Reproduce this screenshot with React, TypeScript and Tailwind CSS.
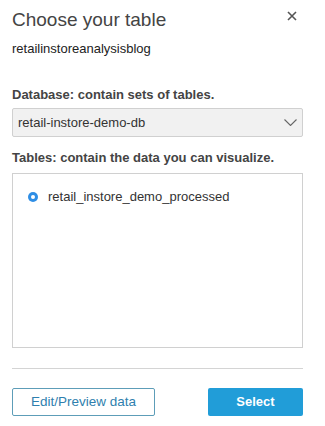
import React from 'react';

const App: React.FC = () => {
  return (
    <div
      className="w-[325px] h-[426px] bg-white pl-3 pr-[22px] text-[#333] overflow-hidden"
      style={{ fontFamily: '"Liberation Sans", Arial, sans-serif' }}
    >
      {/* Header */}
      <div className="flex items-start justify-between pt-[8px]">
        <h1 className="text-[19px] leading-[24px] text-[#444]">Choose your table</h1>
        <svg className="mt-[3px] mr-[6px] text-[#555]" width="10" height="10" viewBox="0 0 10 10">
          <path d="M1 1 L9 9 M9 1 L1 9" stroke="currentColor" strokeWidth="1.6" />
        </svg>
      </div>
      <p className="mt-[9px] text-[13px] leading-[16px] text-[#222]">retailinstoreanalysisblog</p>

      {/* Database */}
      <p className="mt-[30px] text-[13px] leading-[16px] font-bold text-[#444]">Database: contain sets of tables.</p>
      <div className="mt-[5px] h-[29px] flex items-center justify-between pl-[5px] pr-[5px] bg-[#f1f1f1] border border-[#d0d0d0] rounded-[2px]">
        <span className="text-[13px] text-[#333]">retail-instore-demo-db</span>
        <svg width="13" height="7" viewBox="0 0 13 7" className="text-[#666]">
          <path d="M0.5 0.5 L6.5 6.5 L12.5 0.5" fill="none" stroke="currentColor" strokeWidth="1.1" />
        </svg>
      </div>

      {/* Tables */}
      <p className="mt-[13px] text-[13px] leading-[16px] font-bold text-[#444]">Tables: contain the data you can visualize.</p>
      <div className="mt-[7px] h-[175px] border border-[#d0d0d0] pt-[15px] pl-[15px]">
        <div className="flex items-center gap-[10px]">
          <span className="w-[10px] h-[10px] rounded-full bg-[#2f8ee5] flex items-center justify-center">
            <span className="w-[4px] h-[4px] rounded-full bg-white" />
          </span>
          <span className="text-[13px] leading-[16px] text-[#333]">retail_instore_demo_processed</span>
        </div>
      </div>

      <div className="mt-[20px] h-px bg-[#d4d4d4]" />

      {/* Footer buttons */}
      <div className="mt-[19px] flex justify-between">
        <button className="w-[143px] h-[28px] border border-[#5d9db8] rounded-[2px] text-[13.5px] text-[#2f7fae] bg-white">
          Edit/Preview data
        </button>
        <button className="w-[95px] h-[28px] rounded-[2px] bg-[#219dd8] text-[13px] font-bold text-white">
          Select
        </button>
      </div>
    </div>
  );
};

export default App;
